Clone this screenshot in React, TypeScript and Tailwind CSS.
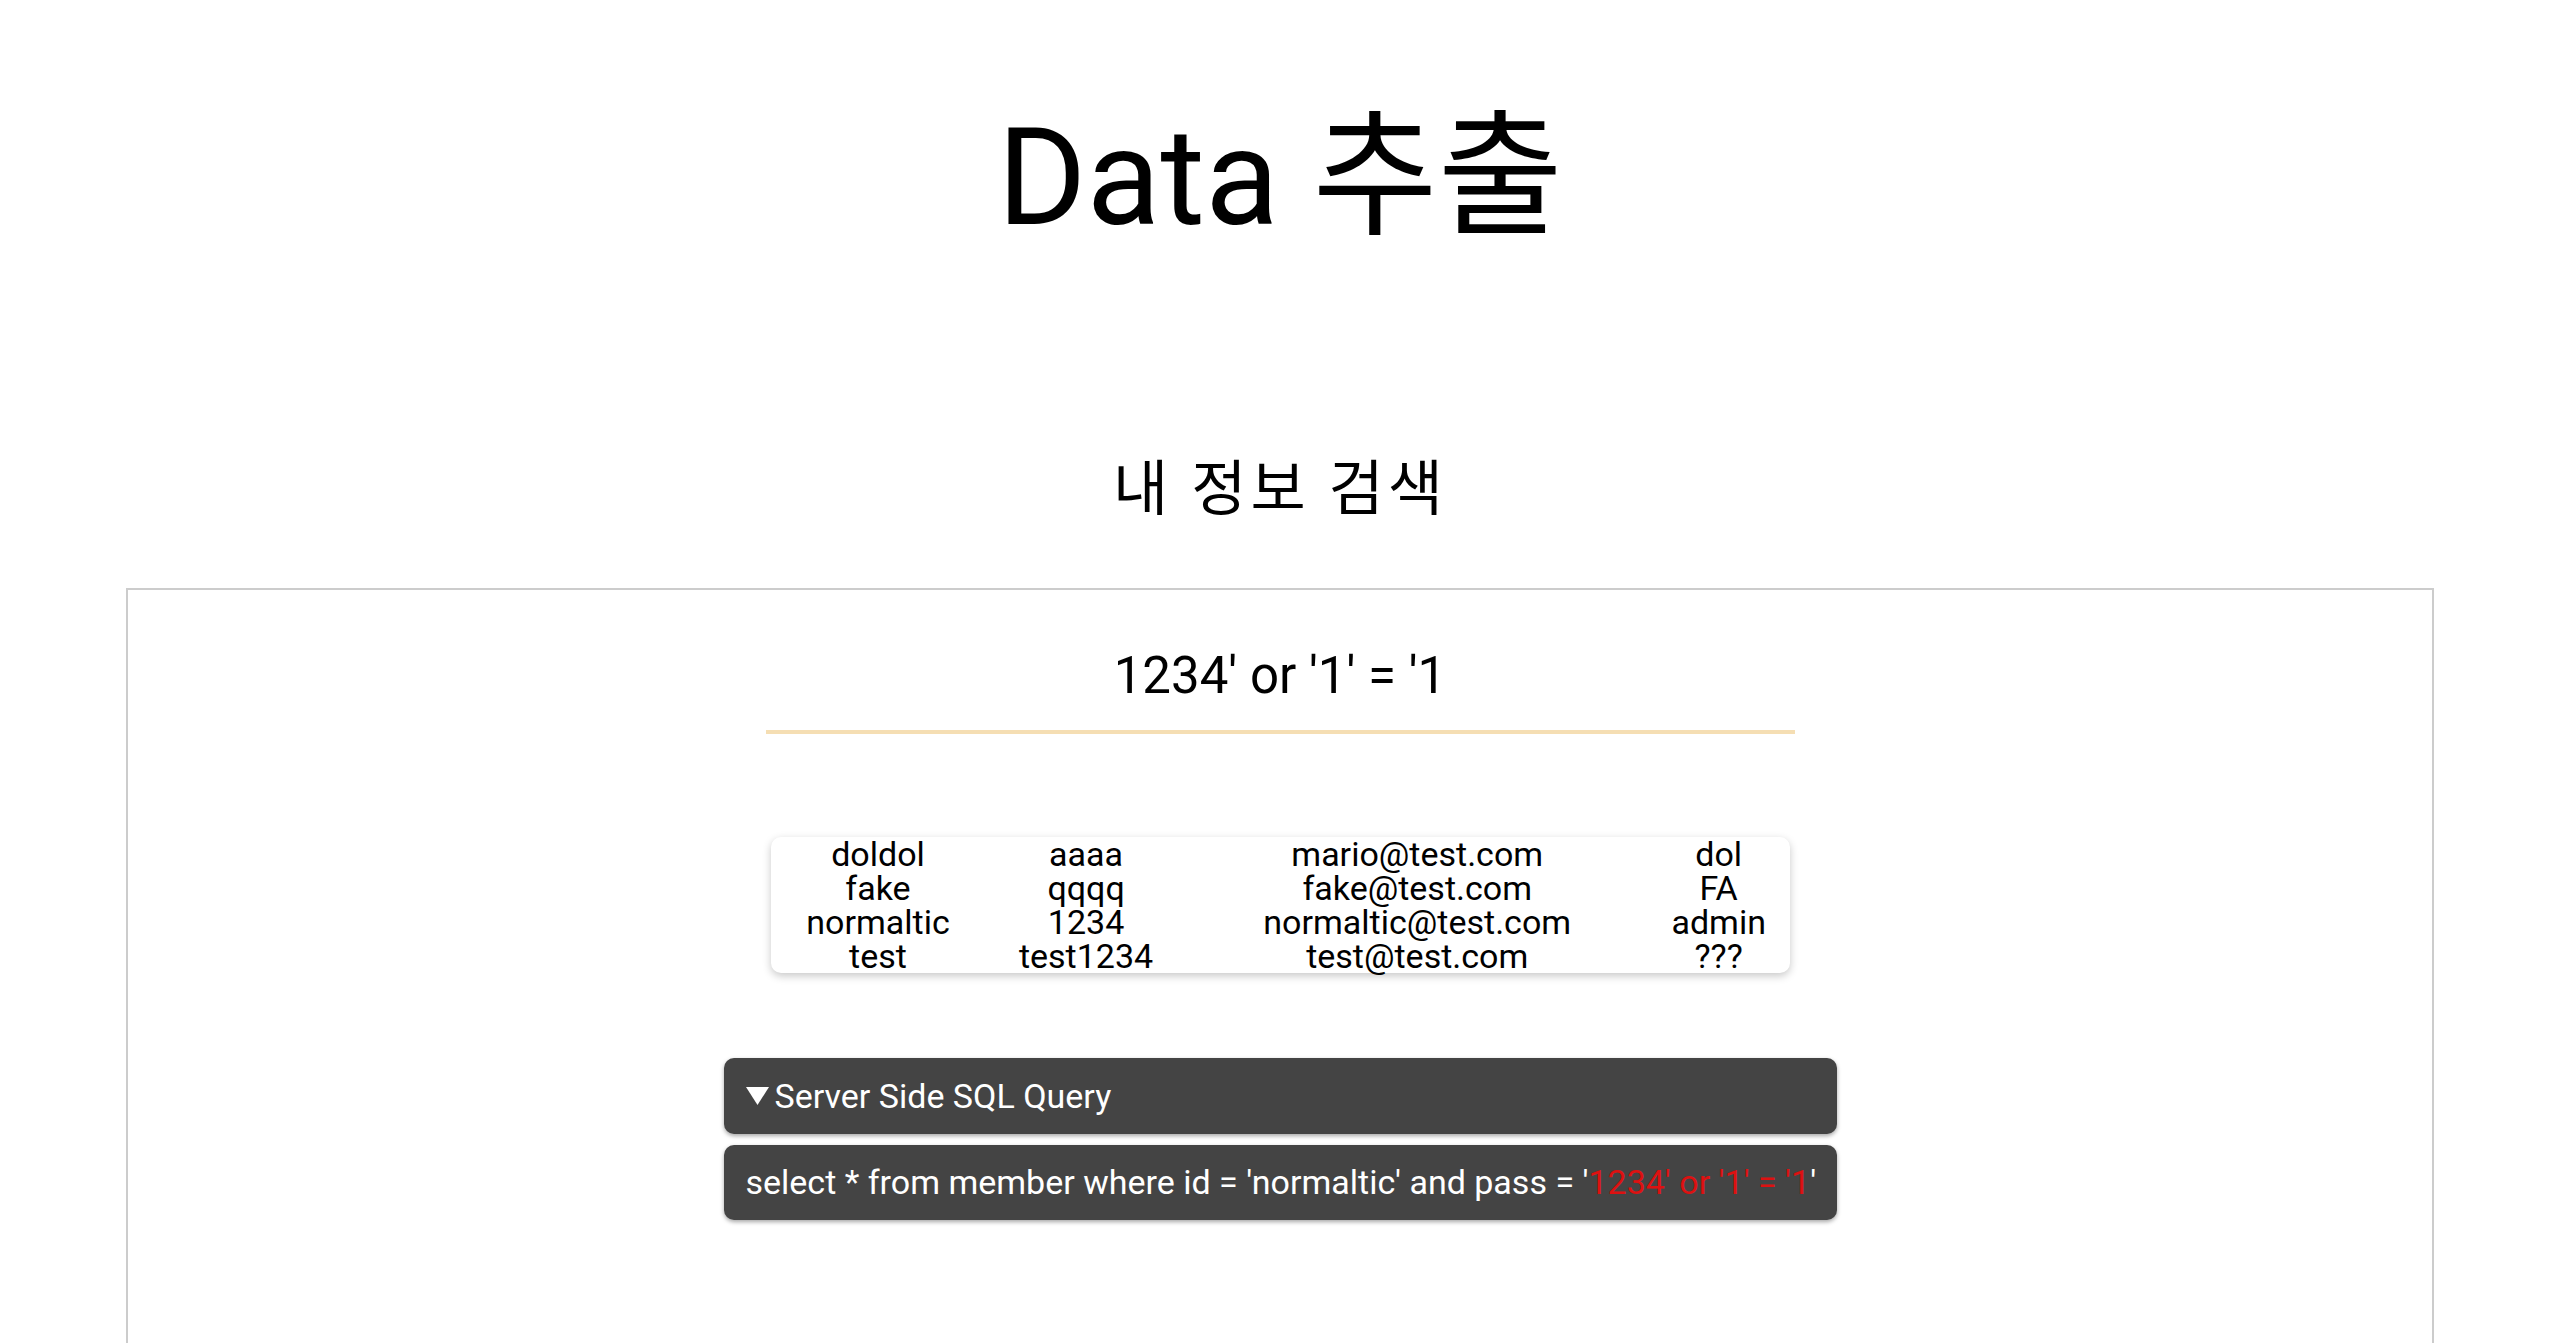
import React from "react";

const ROWS: [string, string, string, string][] = [
  ["doldol", "aaaa", "mario@test.com", "dol"],
  ["fake", "qqqq", "fake@test.com", "FA"],
  ["normaltic", "1234", "normaltic@test.com", "admin"],
  ["test", "test1234", "test@test.com", "???"],
];

const PAYLOAD = "1234' or '1' = '1";

export default function App() {
  return (
    <div
      className="min-h-screen bg-white text-black"
      style={{ fontFamily: 'Roboto, "Noto Sans CJK KR", sans-serif' }}
    >
      {/* Page title */}
      <h1 className="pt-[110px] text-center text-[136px] leading-[136px] font-normal">
        Data 추출
      </h1>

      {/* Section title */}
      <h2 className="mt-[214px] text-center text-[60px] leading-[60px] font-normal tracking-[4px]">
        내 정보 검색
      </h2>

      {/* Search panel */}
      <div className="mx-auto mt-[68px] w-[2308px] border-2 border-[#cccccc] pt-[40px] pb-[400px]">
        <div className="mx-auto w-[1029px] border-b-4 border-[#f5deb3] pt-[15px] pb-[24px] text-center text-[51px] leading-[61px]">
          {PAYLOAD}
        </div>

        {/* Result table */}
        <div className="mx-auto mt-[103px] w-[1019px] rounded-[10px] bg-white shadow-[0_3px_8px_rgba(0,0,0,0.22)]">
          <table className="w-full border-collapse text-center text-[34px] leading-[34px]">
            <tbody>
              {ROWS.map((row, i) => (
                <tr key={i} className="h-[34px]">
                  {row.map((cell, j) => (
                    <td key={j} className="p-0 whitespace-nowrap">
                      {cell}
                    </td>
                  ))}
                </tr>
              ))}
            </tbody>
          </table>
        </div>

        {/* Server side query */}
        <div className="mx-auto mt-[85px] flex w-[1113px] flex-col gap-[11px] text-[34px] text-white">
          <div className="flex h-[76px] items-center rounded-[10px] bg-[#444444] px-[22px] shadow-[0_2px_4px_rgba(0,0,0,0.35)]">
            <svg width="23" height="18" viewBox="0 0 23 18" className="mr-[6px] shrink-0">
              <polygon points="0,0 23,0 11.5,18" fill="#ffffff" />
            </svg>
            <span>Server Side SQL Query</span>
          </div>
          <div className="flex h-[75px] items-center whitespace-nowrap rounded-[10px] bg-[#444444] px-[22px] shadow-[0_2px_4px_rgba(0,0,0,0.35)]">
            <span>
              select * from member where id = 'normaltic' and pass = '
              <span className="text-[#dd1111]">{PAYLOAD}</span>'
            </span>
          </div>
        </div>
      </div>
    </div>
  );
}
